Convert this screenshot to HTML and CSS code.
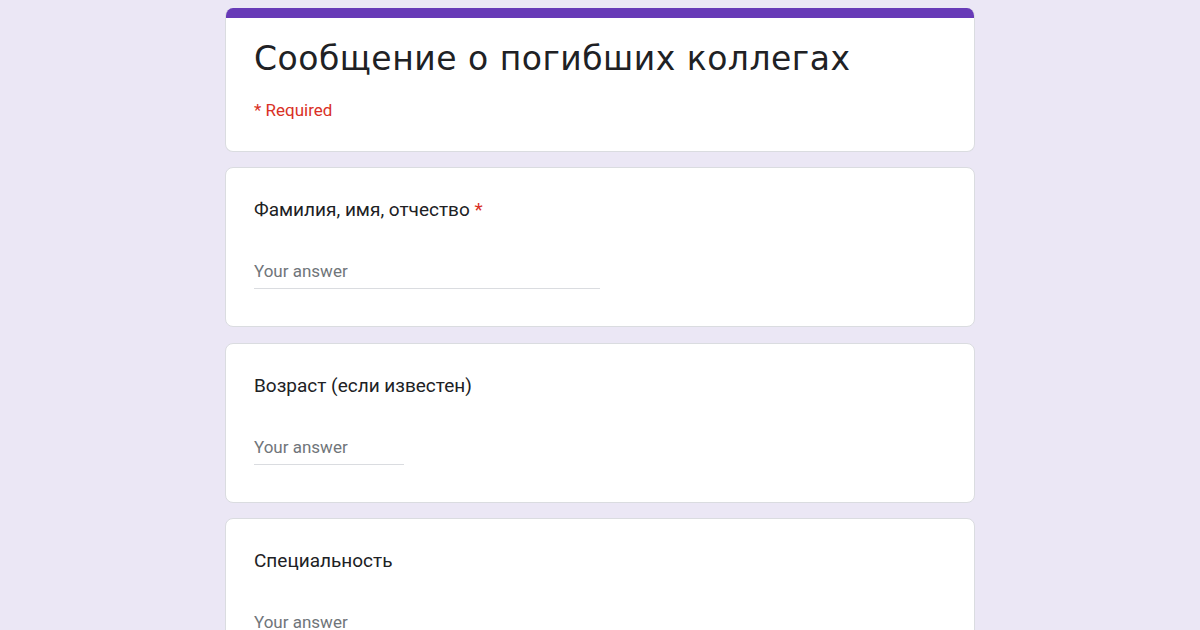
FILE: index.html
```html
<!DOCTYPE html>
<html lang="ru">
<head>
<meta charset="utf-8">
<title>Сообщение о погибших коллегах</title>
<link rel="stylesheet" href="styles.css">
</head>
<body>
<main class="form">
  <section class="card header-card">
    <div class="header-bar"></div>
    <div class="header-body">
      <h1 class="form-title">Сообщение о погибших коллегах</h1>
      <div class="required-note">* Required</div>
    </div>
  </section>

  <section class="card question">
    <div class="q-label">Фамилия, имя, отчество <span class="q-star">*</span></div>
    <div class="answer answer-long"><span class="placeholder">Your answer</span></div>
  </section>

  <section class="card question">
    <div class="q-label">Возраст (если известен)</div>
    <div class="answer answer-short"><span class="placeholder">Your answer</span></div>
  </section>

  <section class="card question">
    <div class="q-label">Специальность</div>
    <div class="answer answer-long"><span class="placeholder">Your answer</span></div>
  </section>
</main>
</body>
</html>
```

FILE: styles.css
```css
html, body {
  margin: 0;
  padding: 0;
  background: #ebe7f5;
  height: 100%;
  overflow: hidden;
}

body {
  font-family: Roboto, "Liberation Sans", Arial, sans-serif;
  color: #202124;
}

.form {
  width: 750px;
  margin: 0 auto;
  padding-top: 8px;
  display: flex;
  flex-direction: column;
  gap: 15.3px;
}

.card {
  background: #ffffff;
  border: 1px solid #dadce0;
  border-radius: 8px;
  box-sizing: border-box;
}

.header-card {
  overflow: hidden;
  height: 144px;
  border-top: none;
}

.header-bar {
  height: 10px;
  background: #673ab7;
}

.header-body {
  padding: 21px 28px 0;
}

.form-title {
  margin: 0;
  font-family: "DejaVu Sans", "Noto Sans", sans-serif;
  font-weight: 400;
  font-size: 33px;
  letter-spacing: 0.5px;
  line-height: 40px;
  color: #202124;
}

.required-note {
  margin-top: 21px;
  font-size: 17px;
  line-height: 20px;
  color: #d93025;
}

.question {
  height: 160px;
  padding: 29px 28px 0;
}

.q-label {
  font-size: 19px;
  line-height: 26px;
  color: #202124;
}

.q-star {
  color: #d93025;
}

.answer {
  margin-top: 33px;
  height: 33px;
  padding-bottom: 2px;
  border-bottom: 1px solid #dadce0;
  box-sizing: border-box;
  display: flex;
  align-items: center;
}

.answer-long {
  width: 346px;
}

.answer-short {
  width: 150px;
}

.placeholder {
  font-size: 17px;
  color: #70757a;
}
```
